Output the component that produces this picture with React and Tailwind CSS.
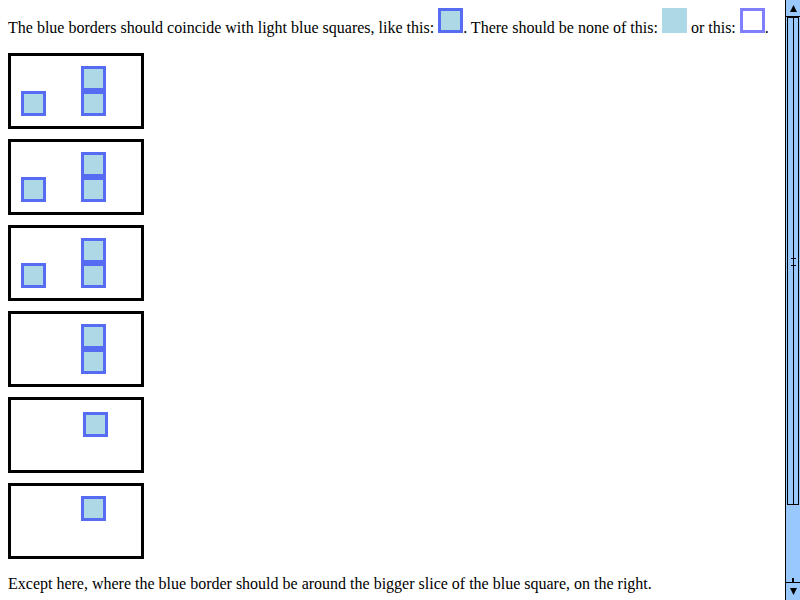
const Sq = ({ className = "" }) => (
  <div className={`h-[25px] w-[25px] border-[3px] border-[#566cf2] bg-[#add8e6] ${className}`} />
);

const Col = ({ className = "" }) => (
  <div className={`flex flex-col ${className}`}>
    <Sq />
    <Sq />
  </div>
);

const Box = ({ children, className = "" }) => (
  <div className={`flex h-[76px] w-[136px] items-start border-[3px] border-black ${className}`}>
    {children}
  </div>
);

const Scrollbar = () => (
  <div className="fixed right-0 top-0 flex h-[600px] w-[15px] flex-col border-l border-black bg-[#99c8ff]">
    <div className="flex h-[17px] items-center justify-center border-b border-black">
      <svg width="9" height="9" viewBox="0 0 9 9">
        <path d="M4.5 1 L8 8 L1 8 Z" fill="#000" />
      </svg>
    </div>
    <div className="relative mx-[1px] h-[488px] border border-black">
      <div className="absolute left-[5px] top-0 h-full w-[1px] bg-black" />
      <div className="absolute left-[3px] top-[240px] h-[8px] w-[5px] border-y border-black" />
    </div>
    <div className="flex-1" />
    <div className="relative flex h-[18px] items-center justify-center border-t border-black">
      <div className="absolute -top-[5px] left-[6px] h-[5px] w-[2px] bg-black" />
      <svg width="9" height="9" viewBox="0 0 9 9">
        <path d="M1 1 L8 1 L4.5 8 Z" fill="#000" />
      </svg>
    </div>
  </div>
);

export default function App() {
  return (
    <div className="relative min-h-[600px] w-[800px] bg-white pl-2 pt-2 text-[16px] text-black [font-family:'Liberation_Serif',serif]">
      <div className="leading-normal">
        The blue borders should coincide with light blue squares, like this:{" "}
        <span className="inline-block h-[25px] w-[25px] border-[3px] border-[#566cf2] bg-[#add8e6] align-baseline" />
        . There should be none of this:{" "}
        <span className="inline-block h-[25px] w-[25px] bg-[#add8e6] align-baseline" /> or this:{" "}
        <span className="inline-block h-[25px] w-[25px] border-[3px] border-[#7f7fff] bg-white align-baseline" />.
      </div>

      <div className="mt-[13px] flex flex-col gap-[10px]">
        <Box className="pl-[10px]">
          <Sq className="mt-[35px]" />
          <Col className="ml-[35px] mt-[10px]" />
        </Box>
        <Box className="pl-[10px]">
          <Sq className="mt-[35px]" />
          <Col className="ml-[35px] mt-[10px]" />
        </Box>
        <Box className="pl-[10px]">
          <Sq className="mt-[35px]" />
          <Col className="ml-[35px] mt-[10px]" />
        </Box>
        <Box className="pl-[70px] pt-[10px]">
          <Col />
        </Box>
        <Box className="pl-[72px] pt-[12px]">
          <Sq />
        </Box>
        <Box className="pl-[70px] pt-[10px]">
          <Sq />
        </Box>
      </div>

      <p className="mt-[13px] leading-normal">
        Except here, where the blue border should be around the bigger slice of the blue square, on the right.
      </p>

      <Scrollbar />
    </div>
  );
}
